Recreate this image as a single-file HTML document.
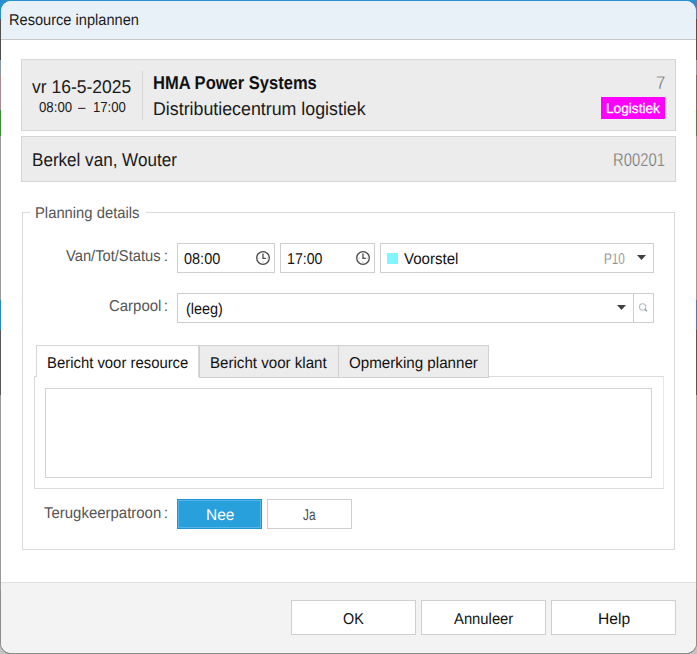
<!DOCTYPE html>
<html><head><meta charset="utf-8"><style>
html,body{margin:0;padding:0;width:697px;height:654px;overflow:hidden;background:#6b6b6b}
body{position:relative;font-family:"Liberation Sans",sans-serif}
.b{position:absolute}
.t{position:absolute;white-space:nowrap;transform-origin:0 0;text-rendering:geometricPrecision}
</style></head><body>
<div class="b" style="left:0px;top:0px;width:697px;height:654px;background:#c4c4c4"></div>
<div class="b" style="left:0px;top:0px;width:697px;height:20px;background:#2b8fcf"></div>
<div class="b" style="left:0px;top:19px;width:1px;height:41px;background:#505050"></div>
<div class="b" style="left:0px;top:60px;width:1px;height:15px;background:#8a98a4"></div>
<div class="b" style="left:0px;top:75px;width:1px;height:35px;background:#a88c94"></div>
<div class="b" style="left:0px;top:110px;width:1px;height:26px;background:#3c8c3c"></div>
<div class="b" style="left:0px;top:136px;width:1px;height:164px;background:#9a9a9a"></div>
<div class="b" style="left:0px;top:300px;width:1px;height:30px;background:#2a8ac0"></div>
<div class="b" style="left:0px;top:330px;width:1px;height:65px;background:#555555"></div>
<div class="b" style="left:0px;top:395px;width:1px;height:245px;background:#9a9a9a"></div>
<div class="b" style="left:696px;top:19px;width:1px;height:41px;background:#505050"></div>
<div class="b" style="left:696px;top:60px;width:1px;height:15px;background:#8a98a4"></div>
<div class="b" style="left:696px;top:75px;width:1px;height:35px;background:#707070"></div>
<div class="b" style="left:696px;top:110px;width:1px;height:26px;background:#3c8c3c"></div>
<div class="b" style="left:696px;top:136px;width:1px;height:164px;background:#9a9a9a"></div>
<div class="b" style="left:696px;top:300px;width:1px;height:30px;background:#2a8ac0"></div>
<div class="b" style="left:696px;top:330px;width:1px;height:65px;background:#555555"></div>
<div class="b" style="left:696px;top:395px;width:1px;height:245px;background:#9a9a9a"></div>
<div class="b" style="left:0px;top:600px;width:697px;height:54px;background:#c4c4c4;border-radius:0 0 11px 11px;box-shadow:inset 0 -1px 0 #8c8c8c"></div>
<div class="b" style="left:0px;top:590px;width:697px;height:64px;border-radius:0 0 11px 11px;box-sizing:border-box;border:1px solid #8c8c8c;border-top:none"></div>
<div class="b" style="left:1px;top:1px;width:695px;height:652px;background:#ffffff;border-radius:10px"></div>
<div class="b" style="left:1px;top:1px;width:695px;height:38px;background:#e9f1f8;border-radius:10px 10px 0 0"></div>
<div class="b" style="left:1px;top:39px;width:695px;height:1px;background:#c8c8c8"></div>
<div class="t" style="left:9.43px;top:12px;font-size:15.7px;line-height:17px;color:#1b1b1b;font-weight:normal;transform:scaleX(0.9308);">Resource inplannen</div>
<div class="b" style="left:21px;top:59px;width:655px;height:72px;background:#ececec;box-sizing:border-box;border:1px solid #d6d6d6"></div>
<div class="t" style="left:32.46px;top:76px;font-size:18.5px;line-height:21px;color:#1a1a1a;font-weight:normal;transform:scaleX(0.9461);">vr 16-5-2025</div>
<div class="t" style="left:38.90px;top:100px;font-size:14.5px;line-height:16px;color:#1a1a1a;font-weight:normal;transform:scaleX(0.9120);">08:00</div>
<div class="t" style="left:78.30px;top:100px;font-size:14.5px;line-height:16px;color:#1a1a1a;font-weight:normal;transform:scaleX(0.9154);">–</div>
<div class="t" style="left:92.61px;top:100px;font-size:14.5px;line-height:16px;color:#1a1a1a;font-weight:normal;transform:scaleX(0.9061);">17:00</div>
<div class="b" style="left:142px;top:71px;width:1px;height:49px;background:#d6d6d6"></div>
<div class="t" style="left:152.83px;top:72px;font-size:18.5px;line-height:21px;color:#111;font-weight:bold;transform:scaleX(0.8934);">HMA Power Systems</div>
<div class="t" style="left:152.78px;top:98px;font-size:18.5px;line-height:21px;color:#1a1a1a;font-weight:normal;transform:scaleX(0.9620);">Distributiecentrum logistiek</div>
<div class="t" style="left:655.66px;top:72px;font-size:18.5px;line-height:21px;color:#555555;font-weight:normal;transform:scaleX(0.9098);-webkit-text-stroke:0.5px #ececec;">7</div>
<div class="b" style="left:601px;top:97px;width:64px;height:22px;background:#ff00ff"></div>
<div class="t" style="left:606.21px;top:101px;font-size:13.8px;line-height:15px;color:#ffffff;font-weight:normal;transform:scaleX(0.9905);-webkit-text-stroke:0.3px #ffffff;">Logistiek</div>
<div class="b" style="left:21px;top:136px;width:655px;height:46px;background:#ececec;box-sizing:border-box;border:1px solid #d6d6d6"></div>
<div class="t" style="left:32.13px;top:149px;font-size:18.5px;line-height:21px;color:#1a1a1a;font-weight:normal;transform:scaleX(0.9226);">Berkel van, Wouter</div>
<div class="t" style="left:612.61px;top:149px;font-size:18.5px;line-height:21px;color:#5a5a5a;font-weight:normal;transform:scaleX(0.8008);-webkit-text-stroke:0.5px #ececec;">R00201</div>
<div class="b" style="left:22px;top:212px;width:653px;height:338px;box-sizing:border-box;border:1px solid #d9d9d9"></div>
<div class="b" style="left:30px;top:205px;width:116px;height:14px;background:#fff"></div>
<div class="t" style="left:34.52px;top:205px;font-size:15.7px;line-height:17px;color:#555555;font-weight:normal;transform:scaleX(0.9428);">Planning details</div>
<div class="t" style="left:65.86px;top:248px;font-size:15.7px;line-height:17px;color:#555555;font-weight:normal;transform:scaleX(0.9376);">Van/Tot/Status</div>
<div class="t" style="left:163.79px;top:248px;font-size:15.7px;line-height:17px;color:#555555;font-weight:normal;">:</div>
<div class="b" style="left:177px;top:243px;width:98px;height:30px;box-sizing:border-box;border:1px solid #cfcfcf;background:#fff"></div>
<div class="t" style="left:184.46px;top:251px;font-size:15.7px;line-height:17px;color:#111111;font-weight:normal;transform:scaleX(0.9236);">08:00</div>
<div class="b" style="left:280px;top:243px;width:95px;height:30px;box-sizing:border-box;border:1px solid #cfcfcf;background:#fff"></div>
<div class="t" style="left:287.24px;top:251px;font-size:15.7px;line-height:17px;color:#111111;font-weight:normal;transform:scaleX(0.9034);">17:00</div>
<svg class="b" style="left:255px;top:250px" width="16" height="16" viewBox="0 0 16 16"><circle cx="8" cy="8" r="6.3" fill="none" stroke="#4a4a4a" stroke-width="1.3"/><path d="M8 3.5V8.3H10.8" fill="none" stroke="#4a4a4a" stroke-width="1.3"/><g fill="#b0b0b0"><rect x="3.3" y="7.6" width="1.2" height="1"/><rect x="11.6" y="7.6" width="1.2" height="1"/><rect x="7.4" y="11.6" width="1.2" height="1"/></g></svg>
<svg class="b" style="left:355px;top:250px" width="16" height="16" viewBox="0 0 16 16"><circle cx="8" cy="8" r="6.3" fill="none" stroke="#4a4a4a" stroke-width="1.3"/><path d="M8 3.5V8.3H10.8" fill="none" stroke="#4a4a4a" stroke-width="1.3"/><g fill="#b0b0b0"><rect x="3.3" y="7.6" width="1.2" height="1"/><rect x="11.6" y="7.6" width="1.2" height="1"/><rect x="7.4" y="11.6" width="1.2" height="1"/></g></svg>
<div class="b" style="left:380px;top:243px;width:274px;height:30px;box-sizing:border-box;border:1px solid #cfcfcf;background:#fff"></div>
<div class="b" style="left:387px;top:253px;width:11px;height:11px;background:#80f6ff"></div>
<div class="t" style="left:404.06px;top:251px;font-size:15.7px;line-height:17px;color:#111111;font-weight:normal;transform:scaleX(0.9595);">Voorstel</div>
<div class="t" style="left:603.66px;top:251px;font-size:15.7px;line-height:17px;color:#5a5a5a;font-weight:normal;transform:scaleX(0.7482);-webkit-text-stroke:0.45px #ffffff;">P10</div>
<svg class="b" style="left:637px;top:255px" width="9" height="5" viewBox="0 0 9 5"><path d="M0 0H9L4.5 5Z" fill="#404040"/></svg>
<div class="t" style="left:108.85px;top:298px;font-size:15.7px;line-height:17px;color:#555555;font-weight:normal;transform:scaleX(0.9533);">Carpool</div>
<div class="t" style="left:163.79px;top:298px;font-size:15.7px;line-height:17px;color:#555555;font-weight:normal;">:</div>
<div class="b" style="left:177px;top:293px;width:477px;height:30px;box-sizing:border-box;border:1px solid #cfcfcf;background:#fff"></div>
<div class="b" style="left:633px;top:293px;width:1px;height:30px;background:#cfcfcf"></div>
<div class="t" style="left:185.73px;top:301px;font-size:15.7px;line-height:17px;color:#111111;font-weight:normal;transform:scaleX(0.9208);">(leeg)</div>
<svg class="b" style="left:617px;top:305px" width="9" height="5" viewBox="0 0 9 5"><path d="M0 0H9L4.5 5Z" fill="#404040"/></svg>
<svg class="b" style="left:637px;top:301px" width="12" height="12" viewBox="0 0 12 12"><circle cx="5.6" cy="5.9" r="3.1" fill="none" stroke="#b3bec4" stroke-width="1.1"/><path d="M7.9 8.2L10 10.3" stroke="#8aa4ae" stroke-width="1.5"/></svg>
<div class="b" style="left:34px;top:376px;width:630px;height:113px;box-sizing:border-box;border:1px solid #dcdcdc;border-right-color:#e8e8e8;background:#fff"></div>
<div class="b" style="left:199px;top:345px;width:140px;height:33px;box-sizing:border-box;border:1px solid #d0d0d0;background:#ececec"></div>
<div class="b" style="left:338px;top:345px;width:151px;height:33px;box-sizing:border-box;border:1px solid #d0d0d0;background:#ececec"></div>
<div class="b" style="left:36px;top:345px;width:163px;height:32px;box-sizing:border-box;border:1px solid #d6d6d6;border-bottom:none;background:#fff"></div>
<div class="t" style="left:47.01px;top:355px;font-size:15.7px;line-height:17px;color:#111111;font-weight:normal;transform:scaleX(0.9479);">Bericht voor resource</div>
<div class="t" style="left:209.89px;top:355px;font-size:15.7px;line-height:17px;color:#111111;font-weight:normal;transform:scaleX(0.9629);">Bericht voor klant</div>
<div class="t" style="left:348.82px;top:355px;font-size:15.7px;line-height:17px;color:#111111;font-weight:normal;transform:scaleX(0.9662);">Opmerking planner</div>
<div class="b" style="left:45px;top:388px;width:607px;height:90px;box-sizing:border-box;border:1px solid #d2d2d2;background:#fff"></div>
<div class="t" style="left:44.40px;top:505px;font-size:15.7px;line-height:17px;color:#555555;font-weight:normal;transform:scaleX(0.9536);">Terugkeerpatroon</div>
<div class="t" style="left:163.79px;top:505px;font-size:15.7px;line-height:17px;color:#555555;font-weight:normal;">:</div>
<div class="b" style="left:177px;top:499px;width:85px;height:30px;box-sizing:border-box;border:1px solid #1f95d6;box-shadow:inset 0 0 0 1px #55b3e6;background:#28a0dc"></div>
<div class="t" style="left:205.56px;top:507px;font-size:15.7px;line-height:17px;color:#ffffff;font-weight:normal;transform:scaleX(0.9834);">Nee</div>
<div class="b" style="left:267px;top:499px;width:85px;height:30px;box-sizing:border-box;border:1px solid #cfcfcf;background:#fff"></div>
<div class="t" style="left:303.42px;top:507px;font-size:15.7px;line-height:17px;color:#4a4a4a;font-weight:normal;transform:scaleX(0.7515);">Ja</div>
<div class="b" style="left:1px;top:582px;width:695px;height:1px;background:#e1e1e1"></div>
<div class="b" style="left:1px;top:583px;width:695px;height:70px;background:#f3f3f3;border-radius:0 0 10px 10px"></div>
<div class="b" style="left:291px;top:600px;width:125px;height:35px;box-sizing:border-box;border:1px solid #cfcfcf;background:#fff"></div>
<div class="t" style="left:342.85px;top:611px;font-size:15.7px;line-height:17px;color:#111111;font-weight:normal;transform:scaleX(0.9165);">OK</div>
<div class="b" style="left:421px;top:600px;width:125px;height:35px;box-sizing:border-box;border:1px solid #cfcfcf;background:#fff"></div>
<div class="t" style="left:454.20px;top:611px;font-size:15.7px;line-height:17px;color:#111111;font-weight:normal;transform:scaleX(0.9440);">Annuleer</div>
<div class="b" style="left:551px;top:600px;width:125px;height:35px;box-sizing:border-box;border:1px solid #cfcfcf;background:#fff"></div>
<div class="t" style="left:597.55px;top:611px;font-size:15.7px;line-height:17px;color:#111111;font-weight:normal;transform:scaleX(0.9941);">Help</div>
</body></html>
